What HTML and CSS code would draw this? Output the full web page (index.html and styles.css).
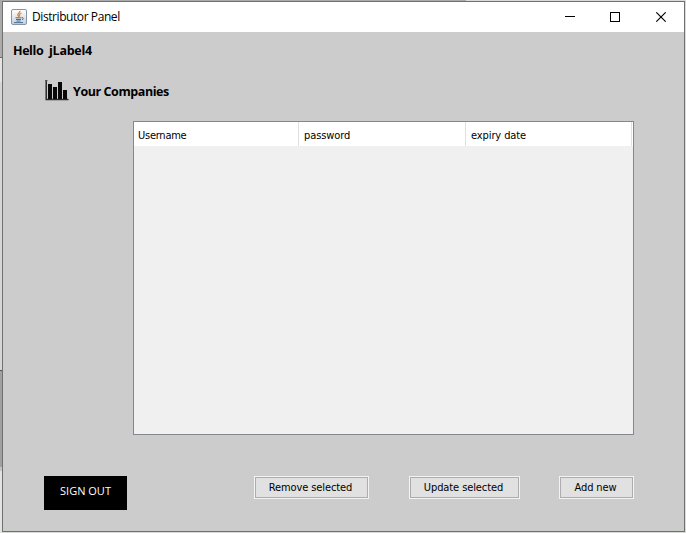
FILE: index.html
```html
<!DOCTYPE html>
<html lang="en">
<head>
<meta charset="utf-8">
<title>Distributor Panel</title>
<link rel="stylesheet" href="styles.css">
</head>
<body>
<main class="window">
  <header class="titlebar">
    <svg class="java" width="16" height="16" viewBox="0 0 16 16">
      <defs><linearGradient id="tile" x2="0" y2="1"><stop stop-color="#fff"/><stop offset="1" stop-color="#c4d0dc"/></linearGradient></defs>
      <rect x=".5" y=".5" width="15" height="15" rx="1.5" fill="url(#tile)" stroke="#8495a5"/>
      <path d="M8.8 1.8C9.6 4 6 4.4 6.8 6.2L8 8M10.5 4C8 5 8 6 9 7.5" fill="none" stroke="#e5852f" stroke-width="1.3"/>
      <path d="M4.5 8.8h6M5 10.5h5M5.5 12h4M3 13.6h9M11 8.6q2.5 0 .2 2.4" fill="none" stroke="#49708f"/>
    </svg>
    <h1 class="title">Distributor Panel</h1>
    <svg class="controls" width="101" height="10" viewBox="0 0 101 10">
      <path d="M0 4.5h10M45.5.5h9v9h-9z" fill="none" stroke="#000" shape-rendering="crispEdges"/>
      <path d="M91.3.3l9.4 9.4M100.7.3l-9.4 9.4" stroke="#000" stroke-width="1.1"/>
    </svg>
  </header>
  <section class="content">
    <p class="greeting"><span class="hello">Hello</span><span class="name">jLabel4</span></p>
    <div class="heading">
      <svg width="24" height="22" viewBox="0 0 24 22">
        <path d="M1.2 1v19.5H23.5" fill="none" stroke="#2b2b2b" stroke-width="1.5"/>
        <path d="M0 1.5h2.5" stroke="#555"/>
        <path d="M3 5h4v15H3zM8 8h4v12H8zM13 3h4v17h-4zM18 11h4v9h-4z" fill="#080808"/>
      </svg>
      <h2>Your Companies</h2>
    </div>
    <div class="table">
      <div class="row"><span class="c1">Username</span><span class="c2">password</span><span class="c3">expiry date</span></div>
    </div>
    <footer class="actions">
      <button class="signout"><span>SIGN OUT</span></button>
      <button class="btn remove"><span>Remove selected</span></button>
      <button class="btn update"><span>Update selected</span></button>
      <button class="btn add"><span>Add new</span></button>
    </footer>
  </section>
</main>
</body>
</html>
```
FILE: styles.css
```css
* { box-sizing: border-box; margin: 0; padding: 0; }
body {
  width: 686px; height: 533px; padding: 1px 1px 1px 2px; overflow: hidden;
  background:
    linear-gradient(#ababab, #ababab) 0 0 / 466px 1px no-repeat,
    linear-gradient(#ababab 0 57px, #666 57px 58px, #e4e4e4 58px 82px, #d6d6d6 82px 370px, #555 370px 371px, #a0a0a0 371px 467px, #c4c4cc 467px 471px, #e2e2e2 471px) 0 0 / 2px 533px no-repeat,
    #d9dbd9;
}
.window { width: 683px; height: 531px; border: 1px solid #707070; background: #ccc; }
.titlebar { height: 30px; display: flex; align-items: center; padding: 0 18px 0 8px; background: #fff; }
.title { margin-left: 5px; font: 400 12px/16px "Open Sans", "Noto Sans", sans-serif; letter-spacing: -.42px; white-space: nowrap; }
.controls { margin-left: auto; }
.content { padding: 10px 50px 0 10px; font-family: "DejaVu Sans Condensed", "DejaVu Sans", sans-serif; }
.greeting, h2 { font: 700 12.5px/18px "Open Sans", "Noto Sans", sans-serif; letter-spacing: -.42px; white-space: nowrap; color: #000; }
.greeting { display: flex; height: 18px; }
.hello { width: 36px; }
.name { letter-spacing: -.25px; }
.heading { display: flex; gap: 4px; height: 22px; margin: 19px 0 0 32px; }
h2 { margin-top: 4px; }
.table { width: 501px; height: 314px; margin: 20px 0 0 120px; border: 1px solid #828790; background: #f0f0f0; }
.row { display: grid; grid-template-columns: 165px 167px 166px; grid-template-rows: 24px; width: 499px; height: 24px; background: #fff; font: 400 11px/27px "DejaVu Sans Condensed", "DejaVu Sans", sans-serif; letter-spacing: -.1px; }
.row span { height: 24px; padding-left: 4px; border-right: 1px solid #e0e0e0; white-space: nowrap; }
.row .c2, .row .c3 { padding-left: 5px; }
.row .c1 { letter-spacing: -.25px; }
.actions { display: flex; align-items: flex-start; margin: 41px 0 0 31px; }
button { border: 0; white-space: nowrap; color: #000; text-align: center; }
.signout { width: 83px; height: 34px; padding-bottom: 4px; background: #000; color: #fff; font: 400 11px/16px "Open Sans", sans-serif; }
.btn { height: 23px; border: 1px solid #f3f3f3; box-shadow: inset 0 0 0 1px #adadad; background: #e1e1e1; font: 400 11px/19px "DejaVu Sans Condensed", "DejaVu Sans", sans-serif; letter-spacing: -.1px; }
.remove { width: 115px; margin-left: 127px; padding-right: 2px; }
.update { width: 111px; margin-left: 40px; padding-right: 2px; }
.add { width: 75px; margin-left: 39px; padding-right: 2px; }
```
